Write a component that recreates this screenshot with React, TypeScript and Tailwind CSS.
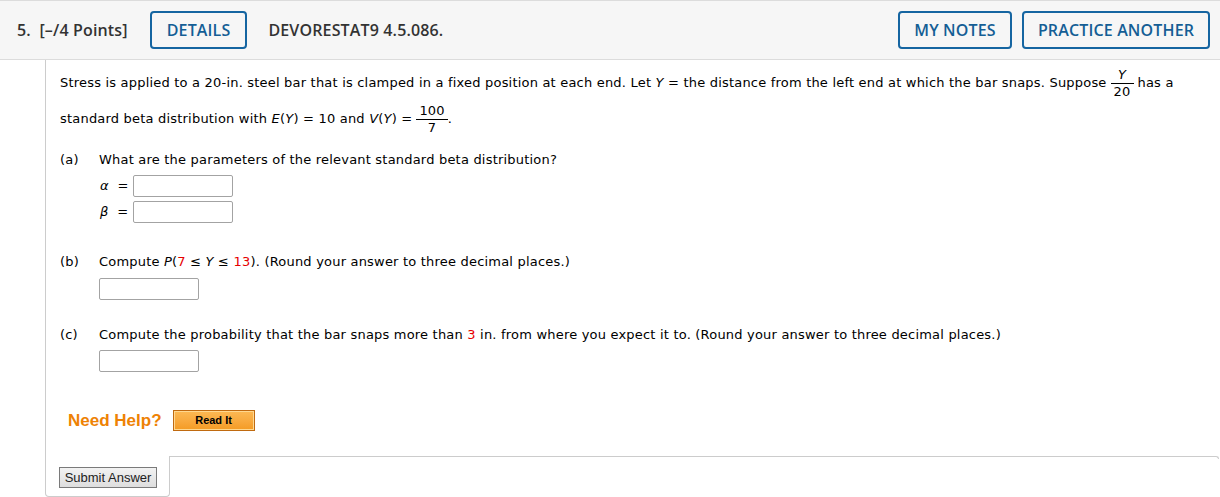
import React from 'react'

const verdana = { fontFamily: '"DejaVu Sans", Verdana, sans-serif' }

function Frac({ top, bottom, italicTop = false }: { top: string; bottom: string; italicTop?: boolean }) {
  return (
    <span className="mx-[4px] inline-flex flex-col items-center leading-[16px]">
      <span className={italicTop ? 'italic px-[3px]' : 'px-[3px]'}>{top}</span>
      <span className="h-px w-full bg-black" />
      <span className="px-[3px]">{bottom}</span>
    </span>
  )
}

function Input({ className = '' }: { className?: string }) {
  return <div className={`h-[22px] w-[100px] rounded-[2px] border border-[#a3a3a3] bg-white ${className}`} />
}

function Red({ children }: { children: React.ReactNode }) {
  return <span className="text-[#e60000]">{children}</span>
}

export default function App() {
  return (
    <div className="h-[497px] w-[1220px] overflow-hidden bg-white text-[#222]">
      {/* header band */}
      <div
        className="flex h-[60px] items-center border-y border-[#dcdcdc] bg-[#f6f6f6] pl-[17px] pr-[10px] text-[16px] font-semibold tracking-[0.15px] text-[#333]"
        style={{ fontFamily: '"Open Sans", sans-serif' }}
      >
        <span className="whitespace-pre">5.  [–/4 Points]</span>
        <button className="ml-[22px] h-[38px] rounded-[4px] border-2 border-[#1565a1] px-[15px] text-[#145e95]">
          DETAILS
        </button>
        <span className="ml-[21px]">DEVORESTAT9 4.5.086.</span>
        <div className="ml-auto flex gap-[10px]">
          <button className="h-[38px] w-[114px] rounded-[4px] border-2 border-[#1565a1] text-[#145e95]">
            MY NOTES
          </button>
          <button className="h-[38px] w-[188px] rounded-[4px] border-2 border-[#1565a1] text-[#145e95]">
            PRACTICE ANOTHER
          </button>
        </div>
      </div>

      <div className="ml-[45px] w-[1174px]">
        {/* question body */}
        <div
          className="border-l border-[#cccccc] pb-[26px] pl-[14px] pt-[5px] text-[13px] tracking-[0.2px] text-black"
          style={verdana}
        >
          <div className="flex h-[36px] items-center whitespace-pre">
            <span>
              Stress is applied to a 20-in. steel bar that is clamped in a fixed position at each end. Let <i>Y</i> = the distance from the left end at which the bar snaps. Suppose
            </span>
            <Frac top="Y" bottom="20" italicTop />
            <span>has a</span>
          </div>
          <div className="flex h-[36px] items-center whitespace-pre">
            <span>
              standard beta distribution with <i>E</i>(<i>Y</i>) = 10 and <i>V</i>(<i>Y</i>) =
            </span>
            <Frac top="100" bottom="7" />
            <span className="-ml-[4px]">.</span>
          </div>

          <div className="mt-[14px] flex h-[18px] items-center">
            <span className="w-[39px]">(a)</span>
            <span>What are the parameters of the relevant standard beta distribution?</span>
          </div>
          <div className="ml-[40px] mt-[6px] flex h-[22px] items-center">
            <span className="w-[33px] whitespace-pre"><i>α</i>  =</span>
            <Input />
          </div>
          <div className="ml-[40px] mt-[4px] flex h-[22px] items-center">
            <span className="w-[33px] whitespace-pre"><i>β</i>  =</span>
            <Input />
          </div>

          <div className="mt-[30px] flex h-[18px] items-center whitespace-pre">
            <span className="w-[39px]">(b)</span>
            <span>
              Compute <i>P</i>(<Red>7</Red> ≤ <i>Y</i> ≤ <Red>13</Red>). (Round your answer to three decimal places.)
            </span>
          </div>
          <Input className="ml-[39px] mt-[7px]" />

          <div className="mt-[26px] flex h-[18px] items-center whitespace-pre">
            <span className="w-[39px]">(c)</span>
            <span>
              Compute the probability that the bar snaps more than <Red>3</Red> in. from where you expect it to. (Round your answer to three decimal places.)
            </span>
          </div>
          <Input className="ml-[39px] mt-[6px]" />

          <div
            className="ml-[8px] mt-[38px] flex h-[21px] items-center tracking-normal"
            style={{ fontFamily: '"Liberation Sans", Arial, sans-serif' }}
          >
            <span className="text-[17px] font-bold text-[#ee8204]">Need Help?</span>
            <button className="ml-[11px] h-[21px] w-[82px] border border-[#c06a10] bg-gradient-to-b from-[#fcb954] to-[#f49b22] text-[11px] font-bold text-black shadow-[inset_0_0_0_1px_#ffd890]">
              Read It
            </button>
          </div>
        </div>

        {/* submit tab */}
        <div className="flex">
          <div className="-mt-px flex h-[41px] w-[125px] items-center rounded-b-[4px] border-x border-b border-[#cccccc] bg-white pl-[13px] pt-[3px]">
            <button
              className="h-[21px] w-[98px] border border-[#7a7a7a] bg-gradient-to-b from-[#f2f2f2] to-[#dedede] text-[13px] text-[#222]"
              style={{ fontFamily: '"Liberation Sans", Arial, sans-serif' }}
            >
              Submit Answer
            </button>
          </div>
          <div className="-ml-px -mt-px h-[3px] flex-1 rounded-tr-[3px] border-l border-r border-t border-[#cccccc]" />
        </div>
      </div>
    </div>
  )
}
